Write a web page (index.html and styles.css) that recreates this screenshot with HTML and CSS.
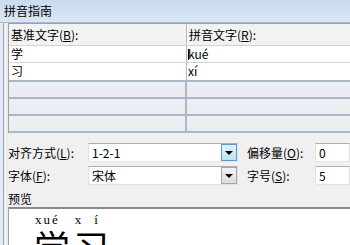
FILE: index.html
```html
<!DOCTYPE html>
<html lang="zh">
<head>
    <meta charset="UTF-8">
    <title>拼音指南</title>
    <link rel="stylesheet" href="styles.css">
</head>
<body>
    <!-- Title bar -->
    <div class="titlebar">拼音指南</div>

    <div class="frame">
        <!-- Base text / pinyin grid -->
        <div class="grid">
            <div class="row head">
                <div class="cell c1">基准文字(<u>B</u>):</div>
                <div class="cell c2">拼音文字(<u>R</u>):</div>
            </div>
            <div class="row item first">
                <div class="cell c1">学</div>
                <div class="cell c2"><span class="caret"></span>kué</div>
            </div>
            <div class="row item">
                <div class="cell c1">习</div>
                <div class="cell c2">xí</div>
            </div>
            <div class="row empty">
                <div class="cell c1"></div>
                <div class="cell c2"></div>
            </div>
            <div class="row empty">
                <div class="cell c1"></div>
                <div class="cell c2"></div>
            </div>
            <div class="row empty last">
                <div class="cell c1"></div>
                <div class="cell c2"></div>
            </div>
        </div>

        <!-- Options -->
        <div class="form">
            <div class="line">
                <span class="lbl">对齐方式(<u>L</u>):</span>
                <div class="combo">
                    <span class="value">1-2-1</span>
                    <span class="drop hover"><i class="arrow"></i></span>
                </div>
                <span class="lbl2">偏移量(<u>O</u>):</span>
                <div class="field">0</div>
            </div>
            <div class="line">
                <span class="lbl">字体(<u>F</u>):</span>
                <div class="combo">
                    <span class="value">宋体</span>
                    <span class="drop"><i class="arrow"></i></span>
                </div>
                <span class="lbl2">字号(<u>S</u>):</span>
                <div class="field">5</div>
            </div>
        </div>

        <!-- Preview -->
        <div class="preview-label">预览</div>
        <div class="preview">
            <div class="pinyin"><span class="py1">xué</span><span class="py2">xí</span></div>
            <div class="big">学习</div>
        </div>
    </div>
</body>
</html>
```

FILE: styles.css
```css
html, body {
    margin: 0;
    padding: 0;
}
body {
    width: 350px;
    height: 245px;
    overflow: hidden;
    background-color: #e3ecf6;
    font-family: "Noto Sans CJK SC", sans-serif;
    font-size: 12px;
    color: #000;
}
u {
    text-decoration: underline;
}
.titlebar {
    height: 22px;
    line-height: 22px;
    padding-left: 4px;
    font-size: 12px;
    background: linear-gradient(#c8dbf0, #dae7f5);
    border-bottom: 1px solid #a3b9d3;
}
.frame {
    margin-left: 3px;
    border-left: 1px solid #98a6b6;
    padding-left: 4px;
    background-color: #f0f0f0;
    height: 222px;
    overflow: hidden;
}

/* grid */
.grid {
    width: 420px;
    border-top: 1px solid #a0a0a0;
    border-left: 1px solid #a0a0a0;
}
.row {
    display: flex;
}
.cell {
    box-sizing: border-box;
    padding-left: 2px;
    white-space: nowrap;
}
.c1 {
    width: 178px;
    border-right: 1px solid #b8b8b8;
}
.c2 {
    flex: 1;
    padding-left: 1px;
}
.head .cell {
    height: 22px;
    line-height: 22px;
    background-color: #f2f2f2;
    border-bottom: 1px solid #d2d2d2;
}
.head .c2 {
    border-left: 1px solid #fff;
}
.item .cell {
    background-color: #fff;
    line-height: 16px;
    height: 17px;
}
.item.first .cell {
    border-bottom: 1px solid #d4d4d4;
}
.caret {
    display: inline-block;
    width: 1px;
    height: 11px;
    background-color: #000;
    vertical-align: -1px;
    margin-right: -1px;
}
.empty .cell {
    height: 17px;
    border-top: 2px solid #a9b7c6;
    background: linear-gradient(#eef0f3, #e9ecf0);
}
.empty .c1 {
    border-right: 2px solid #a9b7c6;
}
.empty.last .cell {
    height: 19px;
    border-bottom: 2px solid #a9b7c6;
}

/* form */
.form {
    margin-top: 10px;
    display: flex;
    flex-direction: column;
    gap: 4px;
}
.line {
    display: flex;
    align-items: center;
    height: 19px;
}
.lbl {
    width: 80px;
}
.lbl2 {
    width: 68px;
    margin-left: 9px;
}
.combo {
    box-sizing: border-box;
    width: 150px;
    height: 19px;
    display: flex;
    align-items: center;
    background-color: #fff;
    border: 1px solid #e2e3ea;
    border-top-color: #abadb3;
}
.combo .value {
    flex: 1;
    padding-left: 3px;
}
.drop {
    box-sizing: border-box;
    width: 16px;
    height: 17px;
    display: flex;
    align-items: center;
    justify-content: center;
    background: linear-gradient(#f3f3f3, #dedede);
    border: 1px solid #a6a6a6;
}
.drop.hover {
    background: linear-gradient(#e2f2fb, #bfe0f3);
    border-color: #5c9dcc;
}
.arrow {
    width: 0;
    height: 0;
    border-left: 4px solid transparent;
    border-right: 4px solid transparent;
    border-top: 4px solid #000;
}
.field {
    box-sizing: border-box;
    flex: 1;
    height: 19px;
    line-height: 17px;
    padding-left: 3px;
    background-color: #fff;
    border: 1px solid #e2e3ea;
    border-top-color: #abadb3;
}

/* preview */
.preview-label {
    margin-top: 6px;
    height: 16px;
    line-height: 16px;
}
.preview {
    background-color: #fff;
    border-top: 2px solid #8a8a8a;
    border-left: 1px solid #a0a0a0;
    padding-left: 26px;
    padding-top: 5px;
    height: 60px;
}
.pinyin {
    font-family: "Liberation Serif", serif;
    font-size: 13px;
    line-height: 12px;
    white-space: nowrap;
}
.py1 {
    letter-spacing: 2px;
}
.py2 {
    margin-left: 15px;
    letter-spacing: 13px;
}
.big {
    font-size: 36px;
    line-height: 40px;
    letter-spacing: 3px;
    margin-left: -1px;
}
```
